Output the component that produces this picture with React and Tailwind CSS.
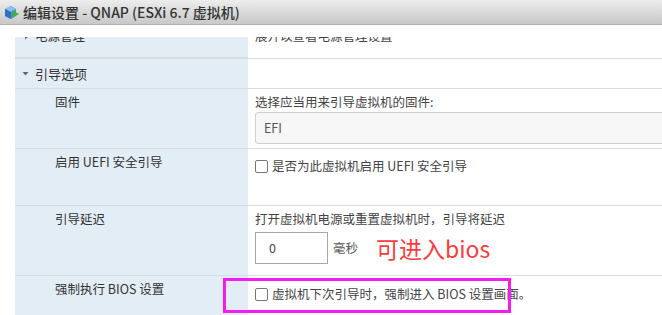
import React from 'react';

const font = { fontFamily: '"Noto Sans CJK SC", "Noto Sans", sans-serif' };

function VmIcon() {
  return (
    <svg width="17" height="17" viewBox="0 0 17 17">
      <path d="M2 5 L8 2 L13 5 L13 12 L8 15 L2 12 Z" fill="#4a8fdc" />
      <path d="M2 5 L8 8 L13 5 L8 2 Z" fill="#8cc0f0" />
      <path d="M8 8 L8 15 L2 12 L2 5 Z" fill="#2f6fc0" />
      <path d="M9 6 L16 10 L9 14 Z" fill="#3cb043" />
    </svg>
  );
}

function Caret({ down }) {
  return (
    <svg width="7" height="7" viewBox="0 0 7 7" className="shrink-0">
      {down ? <path d="M0.5 2 L6.5 2 L3.5 5.5 Z" fill="#666" /> : <path d="M2 0.5 L5.5 3.5 L2 6.5 Z" fill="#666" />}
    </svg>
  );
}

function Box() {
  return <span className="inline-block w-[13px] h-[13px] border border-[#777] rounded-[2px] bg-white shrink-0" />;
}

function Row({ label, children, h, indent = true }) {
  return (
    <div className={`grid grid-cols-[233px_1fr] ${h} border-b border-[#dcdcdc]`}>
      <div className={`bg-[#e3edf5] ${indent ? 'pl-[40px]' : 'pl-[7px]'} pt-[5px] text-[#333] border-b border-[#d2dde7] -mb-px`}>
        {label}
      </div>
      <div className="pl-[7px] pt-[5px] text-[#444]">{children}</div>
    </div>
  );
}

export default function App() {
  return (
    <div className="relative w-[662px] h-[315px] overflow-hidden bg-white text-[12.5px] leading-[16px]" style={font}>
      {/* title bar */}
      <div className="h-[25px] flex items-center gap-[3px] pl-[3px] bg-gradient-to-b from-[#ededed] to-[#c8c8c8] border-b border-[#b3b3b3]">
        <VmIcon />
        <span className="text-[14px] font-medium text-[#333]">编辑设置 - QNAP (ESXi 6.7 虚拟机)</span>
      </div>

      <div className="pt-[12px] pl-[15px]">
        {/* clipped first row */}
        <div className="grid grid-cols-[233px_1fr] h-[22px] overflow-hidden border-b border-[#dcdcdc]">
          <div className="bg-[#e3edf5] pl-[8px] -mt-[9px] flex items-start gap-[5px] text-[#333] border-b border-[#d2dde7]">
            <span className="pt-[5px]"><Caret /></span>
            <span>电源管理</span>
          </div>
          <div className="pl-[7px] -mt-[9px] text-[#444]">展开以查看电源管理设置</div>
        </div>

        <div className="grid grid-cols-[233px_1fr] h-[30px] border-b border-[#dcdcdc]">
          <div className="bg-[#e3edf5] pl-[7px] flex items-center gap-[6px] text-[#333]">
            <Caret down />
            <span className="text-[13px]">引导选项</span>
          </div>
          <div />
        </div>

        <Row label="固件" h="h-[60px]">
          <div>选择应当用来引导虚拟机的固件:</div>
          <div className="mt-[2px] h-[32px] w-[430px] flex items-center pl-[8px] bg-[#f7f7f7] border border-[#d0d0d0] rounded-[3px] text-[#555]">
            EFI
          </div>
        </Row>

        <Row label="启用 UEFI 安全引导" h="h-[57px]">
          <div className="flex items-center gap-[4px] pt-[4px]">
            <Box />
            <span>是否为此虚拟机启用 UEFI 安全引导</span>
          </div>
        </Row>

        <Row label="引导延迟" h="h-[70px]">
          <div>打开虚拟机电源或重置虚拟机时，引导将延迟</div>
          <div className="mt-[5px] flex items-center">
            <div className="h-[32px] w-[73px] flex items-center pl-[13px] border border-[#a8a8a8] text-[#444]">0</div>
            <span className="ml-[5px] text-[#555]">毫秒</span>
            <span className="ml-[18px] text-[23px] leading-[28px] text-[#fb3c3c]">可进入bios</span>
          </div>
        </Row>

        <Row label="强制执行 BIOS 设置" h="h-[60px]">
          <div className="flex items-center gap-[4px] pt-[5px]">
            <Box />
            <span>虚拟机下次引导时，强制进入 BIOS 设置画面。</span>
          </div>
        </Row>
      </div>

      {/* annotation */}
      <div className="absolute left-[223px] top-[278px] w-[288px] h-[35px] border-[3px] border-[#f51cf0]" />
    </div>
  );
}
